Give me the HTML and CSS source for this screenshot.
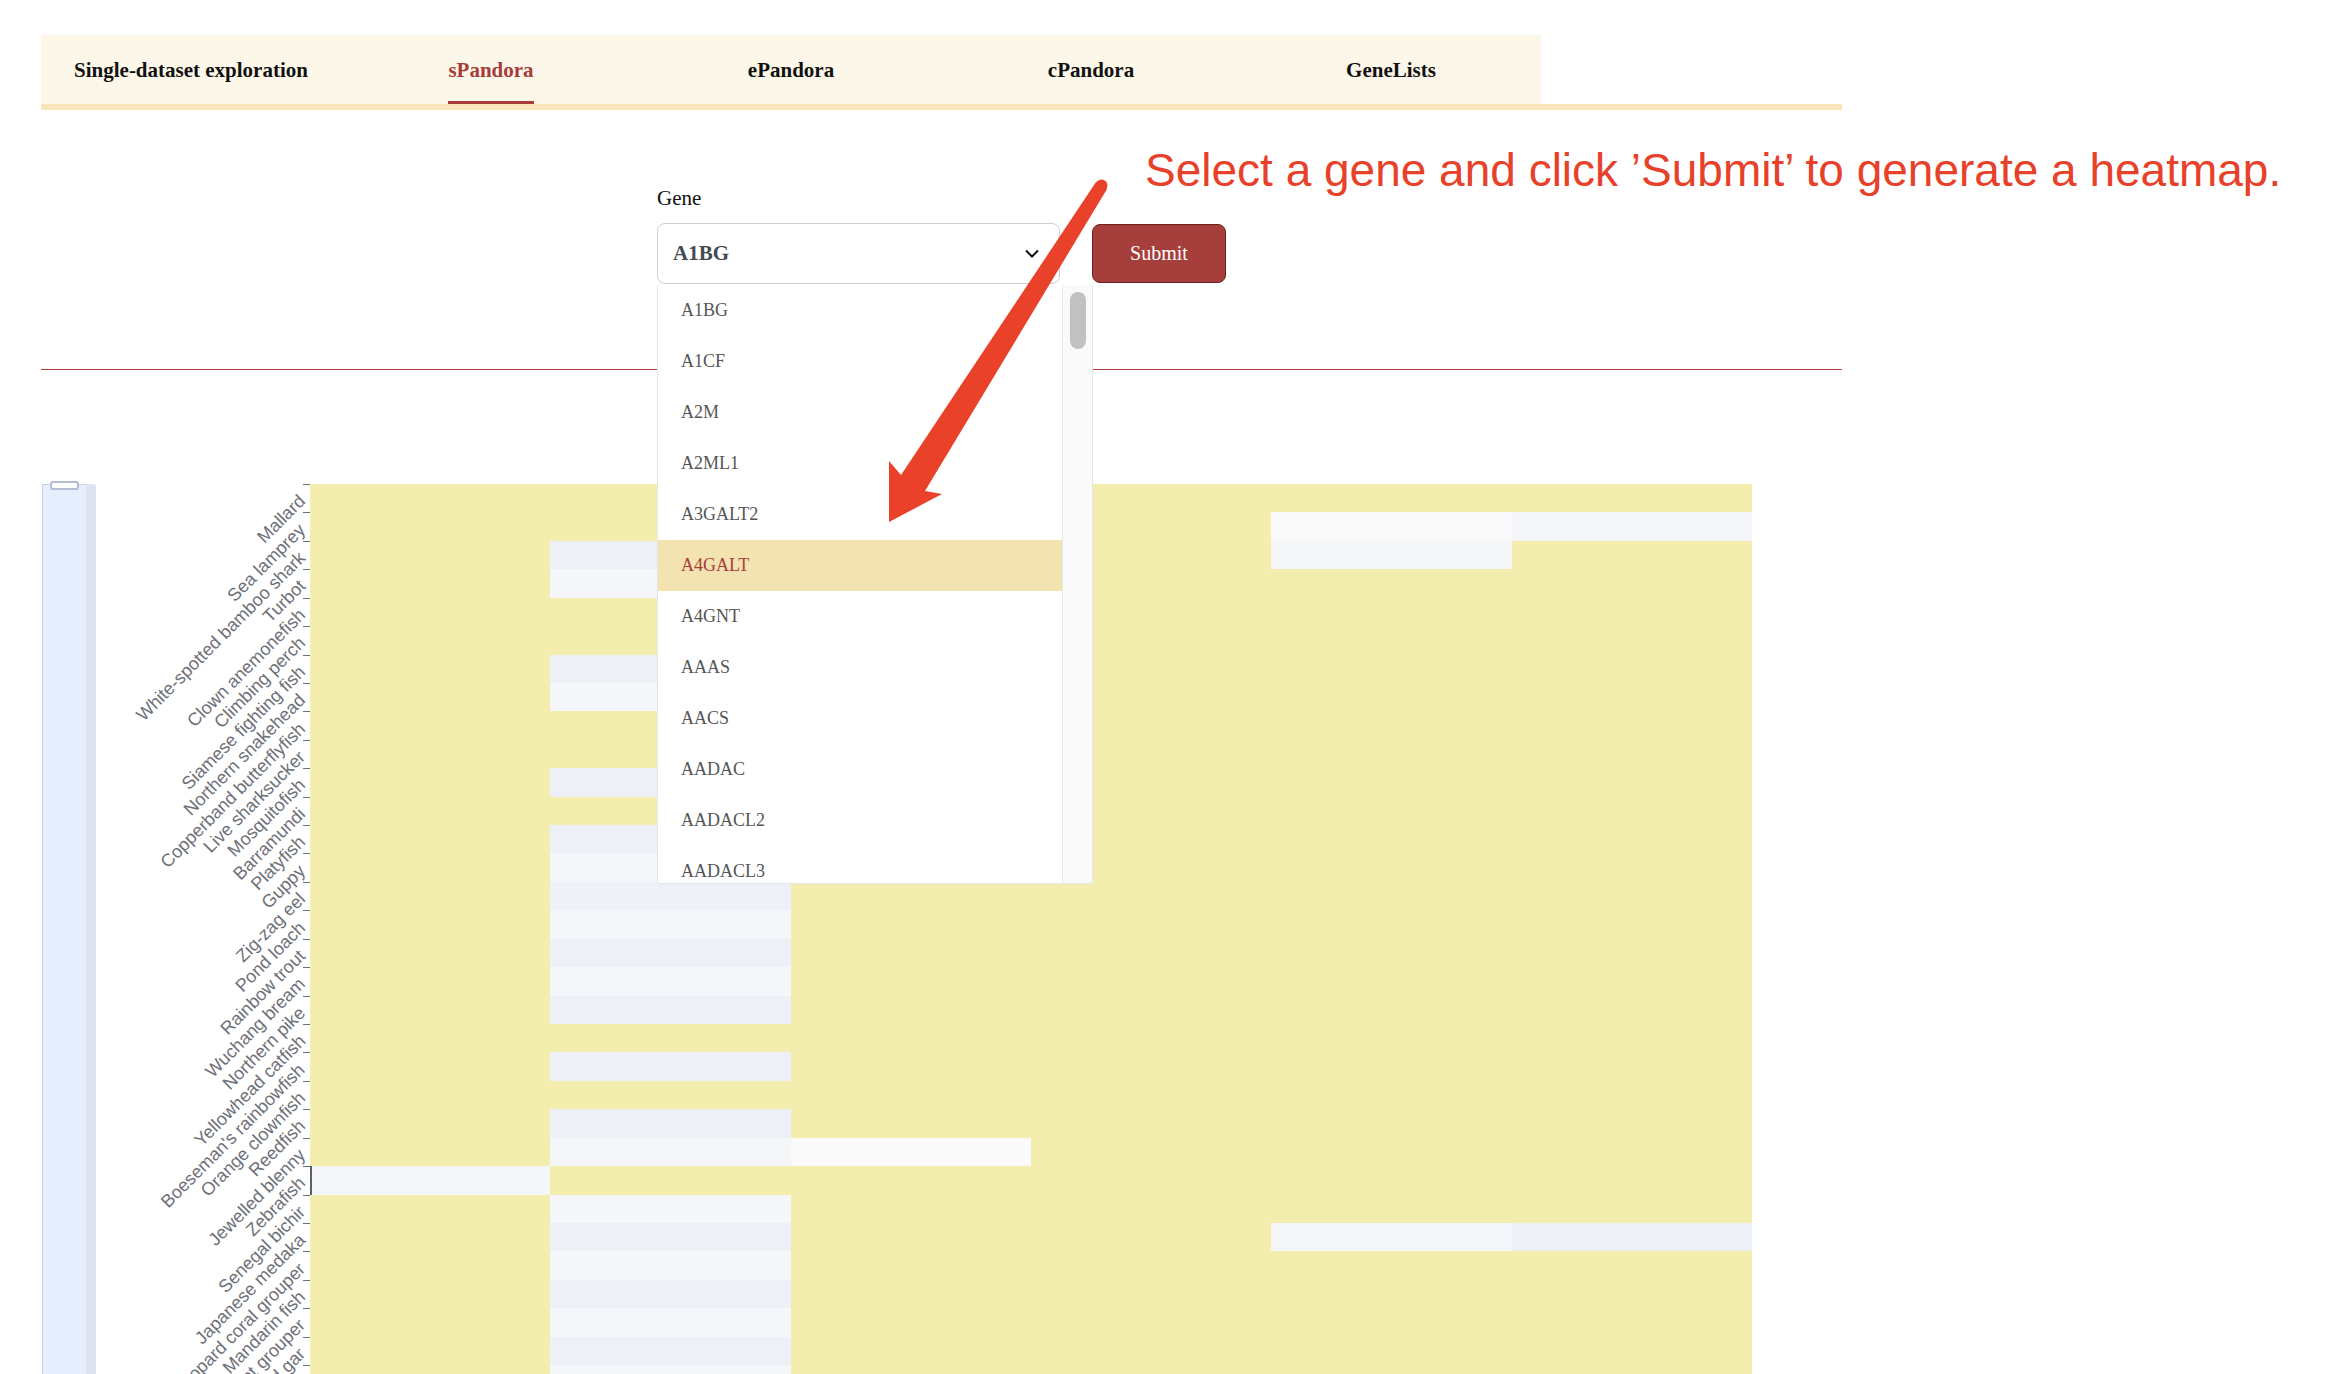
FILE: index.html
```html
<!DOCTYPE html>
<html>
<head>
    <title>sPandora</title>
    <link rel="stylesheet" href="styles.css">
</head>
<body>
    <div class="page">
        <div class="tabs">
            <div class="tab"><span class="tab-label">Single-dataset exploration</span></div>
            <div class="tab active"><span class="tab-label">sPandora</span></div>
            <div class="tab"><span class="tab-label">ePandora</span></div>
            <div class="tab"><span class="tab-label">cPandora</span></div>
            <div class="tab"><span class="tab-label">GeneLists</span></div>
        </div>
        <div class="tabs-line"></div>

        <div class="search">
            <div class="field-label">Gene</div>
            <div class="search-row">
                <div class="select-wrap">
                    <div class="select">
                        <span>A1BG</span>
                        <svg width="14" height="9" viewBox="0 0 14 9"><path d="M1 1.5 L7 7.5 L13 1.5" fill="none" stroke="#111" stroke-width="2"/></svg>
                    </div>
                    <div class="dropdown">
                        <ul class="options">
                            <li>A1BG</li>
                            <li>A1CF</li>
                            <li>A2M</li>
                            <li>A2ML1</li>
                            <li>A3GALT2</li>
                            <li class="hover">A4GALT</li>
                            <li>A4GNT</li>
                            <li>AAAS</li>
                            <li>AACS</li>
                            <li>AADAC</li>
                            <li>AADACL2</li>
                            <li>AADACL3</li>
                        </ul>
                        <div class="scroll-track"><div class="scroll-thumb"></div></div>
                    </div>
                </div>
                <button class="submit">Submit</button>
            </div>
        </div>

        <hr class="divider">

        <div class="chart">
            <div class="zoom-slider">
                <div class="zoom-handle"></div>
                <div class="zoom-fill"></div>
                <div class="zoom-shadow"></div>
            </div>
            <div class="heatmap" id="heatmap"></div>
        </div>
    </div>

    <div class="hint">Select a gene and click ’Submit’ to generate a heatmap.</div>
    <svg class="arrow" width="2350" height="1374" viewBox="0 0 2350 1374">
        <circle cx="1101.5" cy="185.5" r="6" fill="#e9412a"/>
        <polygon points="1096,182 1107,189 925,491 942,494 889,522 889,461 901,475" fill="#e9412a"/>
    </svg>

    <script>
        const species = [
            'Mallard', 'Sea lamprey', 'White-spotted bamboo shark', 'Turbot',
            'Clown anemonefish', 'Climbing perch', 'Siamese fighting fish',
            'Northern snakehead', 'Copperband butterflyfish', 'Live sharksucker',
            'Mosquitofish', 'Barramundi', 'Platyfish', 'Guppy', 'Zig-zag eel',
            'Pond loach', 'Rainbow trout', 'Wuchang bream', 'Northern pike',
            'Yellowhead catfish', "Boeseman's rainbowfish", 'Orange clownfish',
            'Reedfish', 'Jewelled blenny', 'Zebrafish', 'Senegal bichir',
            'Japanese medaka', 'Leopard coral grouper', 'Mandarin fish',
            'Giant grouper', 'Spotted gar'
        ];

        // b = blue-grey, l = light, w = near white
        const marks = {
            1: {4: 'w', 5: 'l'},
            2: {1: 'b', 4: 'l'},
            3: {1: 'l'},
            6: {1: 'b'},
            7: {1: 'l'},
            10: {1: 'b'},
            12: {1: 'b'},
            13: {1: 'l'},
            14: {1: 'b'},
            15: {1: 'l'},
            16: {1: 'b'},
            17: {1: 'l'},
            18: {1: 'b'},
            20: {1: 'b'},
            22: {1: 'b'},
            23: {1: 'l', 2: 'w'},
            24: {0: 'l mark'},
            25: {1: 'l'},
            26: {1: 'b', 4: 'l', 5: 'b'},
            27: {1: 'l'},
            28: {1: 'b'},
            29: {1: 'l'},
            30: {1: 'b'},
            31: {1: 'l'}
        };

        const heatmap = document.getElementById('heatmap');
        for (let r = 0; r < 32; r++) {
            const label = document.createElement('div');
            label.className = 'ylabel';
            const text = document.createElement('span');
            text.textContent = species[r] || '';
            label.appendChild(text);
            heatmap.appendChild(label);

            const tick = document.createElement('div');
            tick.className = 'ytick';
            heatmap.appendChild(tick);

            for (let c = 0; c < 6; c++) {
                const cell = document.createElement('div');
                const m = marks[r] && marks[r][c];
                cell.className = 'cell' + (m ? ' ' + m : '');
                heatmap.appendChild(cell);
            }
        }
    </script>
</body>
</html>
```

FILE: styles.css
```css
html, body {
    overflow: hidden;
}

body {
    margin: 0;
    font-family: 'Liberation Serif', 'Times New Roman', serif;
    background: #fff;
    color: #111;
}

.page {
    width: 1801px;
    margin-left: 41px;
    padding-top: 35px;
}

.tabs {
    display: flex;
    width: 1500px;
    height: 69px;
    background: #fdf7e9;
}

.tab {
    width: 300px;
    display: flex;
    justify-content: center;
    cursor: pointer;
}

.tab-label {
    display: flex;
    align-items: center;
    padding-top: 4px;
    border-bottom: 3px solid transparent;
    font-size: 21px;
    font-weight: bold;
    color: #111;
}

.tab.active .tab-label {
    color: #a83c3a;
    border-bottom-color: #a83c3a;
}

.tabs-line {
    height: 6px;
    background: #f7e7ba;
}

.search {
    margin-top: 76px;
    padding-left: 616px;
}

.field-label {
    font-size: 21px;
    line-height: 24px;
    margin-bottom: 13px;
}

.search-row {
    display: flex;
    gap: 32px;
    align-items: flex-start;
}

.select-wrap {
    position: relative;
}

.select {
    width: 403px;
    height: 61px;
    box-sizing: border-box;
    border: 1px solid #cfcfcf;
    border-radius: 8px;
    display: flex;
    align-items: center;
    justify-content: space-between;
    padding: 0 20px 0 15px;
    font-size: 21px;
    font-weight: bold;
    color: #444b53;
}

.dropdown {
    position: absolute;
    top: 62px;
    left: 0;
    width: 436px;
    height: 599px;
    box-sizing: border-box;
    border: 1px solid #e6e6e6;
    border-top: none;
    border-radius: 0 0 4px 4px;
    background: #fff;
    display: flex;
    overflow: hidden;
    z-index: 5;
}

.options {
    list-style: none;
    margin: 0;
    padding: 0;
    flex: 1;
}

.options li {
    height: 51px;
    line-height: 51px;
    padding-left: 23px;
    font-size: 18px;
    color: #555;
}

.options li.hover {
    background: #f3e3b0;
    color: #a83c3a;
}

.scroll-track {
    width: 29px;
    padding-top: 7px;
    background: #fafafa;
    border-left: 1px solid #e9e9e9;
}

.scroll-thumb {
    width: 16px;
    height: 57px;
    margin-left: 7px;
    border-radius: 8px;
    background: #c1c1c1;
}

.submit {
    width: 134px;
    height: 59px;
    margin-top: 1px;
    background: #a63e3b;
    border: 1px solid #6e1f1f;
    border-radius: 8px;
    color: #fff;
    font-family: 'Liberation Serif', 'Times New Roman', serif;
    font-size: 20px;
    cursor: pointer;
}

.divider {
    margin: 85px 0 0;
    height: 0;
    border: 0;
    border-top: 1px solid #b3423f;
}

.chart {
    display: flex;
    padding-top: 114px;
}

.zoom-slider {
    position: relative;
    margin-left: 1px;
    width: 54px;
    height: 1000px;
    display: flex;
}

.zoom-fill {
    width: 44px;
    box-sizing: border-box;
    background: #e6edfc;
    border-left: 1px solid #c6d0e8;
    border-top: 1px solid #c6d0e8;
}

.zoom-shadow {
    width: 10px;
    background: #dde3f0;
    border-top-right-radius: 3px;
}

.zoom-handle {
    position: absolute;
    top: -3px;
    left: 8px;
    width: 29px;
    height: 9px;
    box-sizing: border-box;
    border: 2px solid #b3bdd6;
    border-radius: 3px;
    background: #fff;
}

.heatmap {
    display: grid;
    grid-template-columns: 206px 8px repeat(6, 240.33px);
    grid-auto-rows: 28.43px;
}

.ylabel {
    display: flex;
    justify-content: flex-end;
    align-items: center;
    min-width: 0;
    font-family: 'Liberation Sans', Arial, sans-serif;
    font-size: 18px;
    color: #6e7079;
}

.ylabel span {
    flex-shrink: 0;
    white-space: nowrap;
    line-height: 18px;
    transform: rotate(-45deg);
    transform-origin: 100% 50%;
}

.ytick {
    margin-left: 1px;
    border-top: 1px solid #6e7079;
}

.cell {
    background: #f3eeae;
}

.cell.b {
    background: #eef0f8;
}

.cell.l {
    background: #f5f6fa;
}

.cell.w {
    background: #fafafa;
}

.cell.mark {
    box-shadow: inset 2px 0 0 #5b5f66;
}

.hint {
    position: absolute;
    left: 1145px;
    top: 147px;
    font-family: 'Liberation Sans', Arial, sans-serif;
    font-size: 46px;
    line-height: 46px;
    color: #e8412a;
    white-space: nowrap;
}

.arrow {
    position: absolute;
    left: 0;
    top: 0;
    pointer-events: none;
    z-index: 10;
}
```
